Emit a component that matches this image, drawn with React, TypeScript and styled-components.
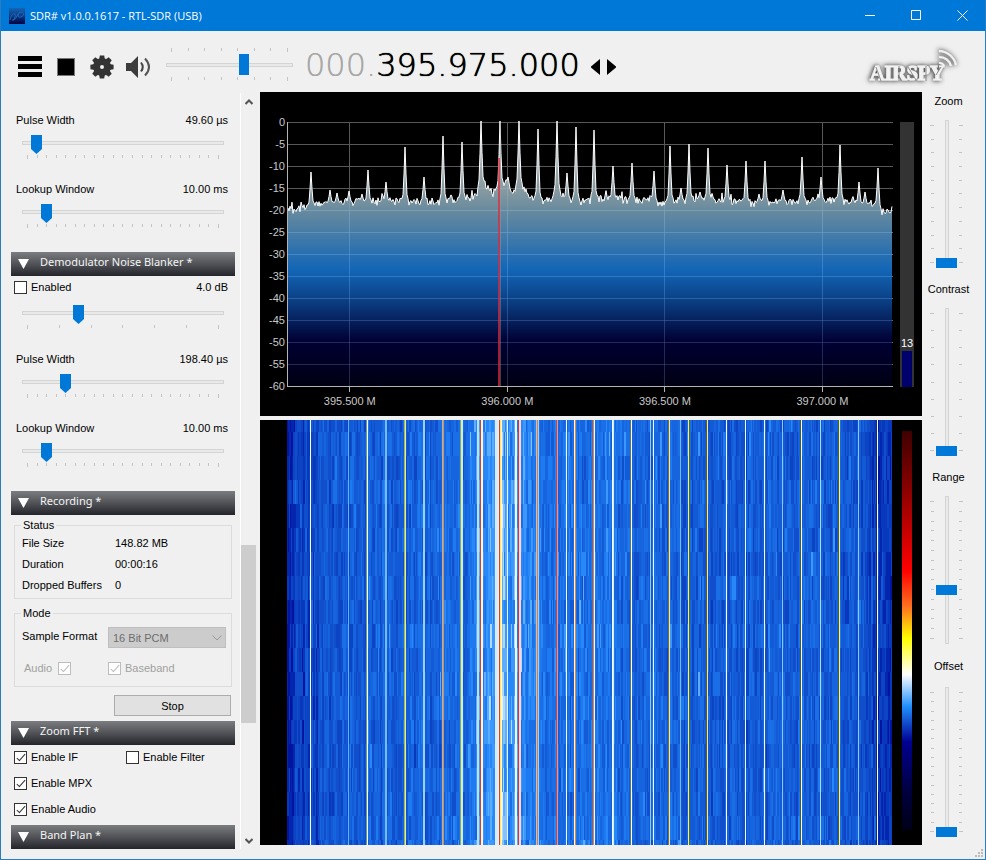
import React from "react";
import styled, { createGlobalStyle, css } from "styled-components";

const GlobalStyle = createGlobalStyle`
  *, *::before, *::after { box-sizing: border-box; }
  body { margin: 0; background: #f0f0f0; }
  button, input, select { font: inherit; color: inherit; margin: 0; }
`;

const UI_FONT = '"Liberation Sans", Arial, sans-serif';
const ACCENT = "#0078d7";

/* ---------- window ---------- */

const Window = styled.div`
  min-height: 100vh;
  display: flex;
  flex-direction: column;
  border: 1px solid #2b7cbf;
  border-top: 0;
  background: #f0f0f0;
  color: #000;
  font: 11px/14px ${UI_FONT};
`;

const TitleBar = styled.header`
  display: flex;
  align-items: center;
  height: 31px;
  padding-left: 8px;
  background: ${ACCENT};
  color: #fff;
`;

const Title = styled.h1`
  flex: 1;
  margin: 0 0 0 5px;
  font: 400 11px/31px "Open Sans", "Noto Sans", sans-serif;
`;

const CaptionButton = styled.button`
  width: 46px;
  height: 31px;
  padding: 0;
  border: 0;
  background: none;
  display: grid;
  place-items: center;
`;

const Toolbar = styled.div`
  display: flex;
  align-items: center;
  height: 61px;
  padding: 10px 20px 0 17px;
`;

const ToolButton = styled.button<{ $gap: number }>`
  padding: 0;
  border: 0;
  background: none;
  display: grid;
  margin-right: ${(p) => p.$gap}px;
`;

const Spacer = styled.div`
  flex: 1;
`;

const Frequency = styled.output`
  font: 200 32px/40px "DejaVu Sans", sans-serif;
  text-shadow: 0 0 0 currentColor, 0 0 1px currentColor;
  white-space: nowrap;
  margin: 0 11px 3px 12px;
`;

const Muted = styled.span`
  color: #a8a8a8;
  text-shadow: 0 0 0 currentColor;
`;

const Body = styled.main`
  flex: 1;
  display: grid;
  grid-template-columns: 239px 16px minmax(0, 1fr) 63px;
`;

/* ---------- sliders ---------- */

const groove = css`
  --edge: linear-gradient(#d4d4d4, #d4d4d4);
  --inner: linear-gradient(#e8eaea, #e8eaea);
`;

const rangeReset = css`
  appearance: none;
  display: block;
  padding: 0;
  border: 0;
`;

const HRange = styled.input.attrs({ type: "range" })<{ $pointed?: boolean }>`
  ${rangeReset}
  ${groove}
  width: 100%;
  height: ${(p) => (p.$pointed ? 19 : 21)}px;
  background:
    var(--inner) 50% ${(p) => (p.$pointed ? 7 : 10)}px / calc(100% - 2px) 2px no-repeat,
    var(--edge) 50% ${(p) => (p.$pointed ? 6 : 9)}px / 100% 4px no-repeat;
  &::-webkit-slider-thumb {
    appearance: none;
    width: ${(p) => (p.$pointed ? 11 : 10)}px;
    height: ${(p) => (p.$pointed ? 19 : 21)}px;
    background: ${ACCENT};
    clip-path: ${(p) =>
      p.$pointed ? "polygon(0 0, 100% 0, 100% 14px, 50% 100%, 0 14px)" : "none"};
  }
`;

const VRange = styled.input.attrs({ type: "range" })`
  ${rangeReset}
  ${groove}
  writing-mode: vertical-lr;
  direction: rtl;
  width: 21px;
  height: 100%;
  background:
    var(--inner) 10px 50% / 2px calc(100% - 2px) no-repeat,
    var(--edge) 9px 50% / 4px 100% no-repeat;
  &::-webkit-slider-thumb {
    appearance: none;
    width: 21px;
    height: 10px;
    background: ${ACCENT};
  }
`;

const Ticks = styled.div<{ $vertical?: boolean; $end?: boolean }>`
  display: flex;
  justify-content: space-between;
  flex-direction: ${(p) => (p.$vertical ? "column" : "row")};
  align-items: ${(p) => (p.$end ? "flex-end" : "flex-start")};
  padding: ${(p) => (p.$vertical ? "5px 0" : "0 5px")};
  height: ${(p) => (p.$vertical ? "auto" : "4px")};
`;

const Tick = styled.i<{ $vertical?: boolean }>`
  background: #c4c4c4;
  width: ${(p) => (p.$vertical ? 3 : 1)}px;
  height: ${(p) => (p.$vertical ? 1 : 3)}px;
  &:first-child,
  &:last-child {
    ${(p) => (p.$vertical ? "width: 4px;" : "height: 4px;")}
  }
`;

function TickRow(props: { count: number; vertical?: boolean; end?: boolean }) {
  return (
    <Ticks $vertical={props.vertical} $end={props.end} aria-hidden>
      {Array.from({ length: props.count }, (_, i) => (
        <Tick key={i} $vertical={props.vertical} />
      ))}
    </Ticks>
  );
}

const Volume = styled.div`
  width: 127px;
  margin-bottom: 14px;
  display: grid;
  gap: 2px;
  padding-top: 9px;
`;

/* ---------- sidebar ---------- */

const Sidebar = styled.aside`
  padding: 21px 5px 10px 10px;
  overflow: hidden;
`;

const Field = styled.div<{ $first?: boolean }>`
  height: ${(p) => (p.$first ? 72 : 69)}px;
  display: flex;
  flex-direction: column;
  gap: ${(p) => (p.$first ? 11 : 8)}px;
`;

const FieldHead = styled.div<{ $first?: boolean }>`
  display: flex;
  align-items: center;
  justify-content: space-between;
  height: 14px;
  padding: 0 7px 0 ${(p) => (p.$first ? 3 : 5)}px;
`;

const FieldSlider = styled.div`
  display: grid;
  gap: 1px;
  padding: 0 11px;
`;

const SectionHeader = styled.button<{ $gap?: number }>`
  width: 100%;
  height: 24px;
  margin: 1px 0 ${(p) => p.$gap ?? 0}px;
  padding: 0 0 4px 7px;
  border: 0;
  display: flex;
  align-items: center;
  gap: 11px;
  background: linear-gradient(#7c7d80, #4c4e53 55%, #24252a);
  color: #f4f4f4;
  font: 11px/20px "Noto Sans", sans-serif;
  text-align: left;
  svg {
    margin-top: 4px;
  }
`;

const CheckLabel = styled.label<{ $reverse?: boolean; $disabled?: boolean }>`
  display: inline-flex;
  flex-direction: ${(p) => (p.$reverse ? "row-reverse" : "row")};
  align-items: center;
  gap: ${(p) => (p.$reverse ? 6 : 4)}px;
  color: ${(p) => (p.$disabled ? "#a0a0a0" : "#000")};
`;

const CheckBox = styled.input.attrs({ type: "checkbox" })`
  appearance: none;
  width: 13px;
  height: 13px;
  border: 1px solid #333;
  background: #fff;
  display: grid;
  justify-content: center;
  &:checked::before {
    content: "";
    width: 4px;
    height: 9px;
    border: solid #333;
    border-width: 0 1px 1px 0;
    transform: rotate(42deg);
  }
  &:disabled,
  &:disabled::before {
    border-color: #bcbcbc;
  }
`;

const Group = styled.fieldset<{ $gap: number }>`
  margin: 0 3px ${(p) => p.$gap}px;
  padding: 1px 5px 2px 6px;
  border: 1px solid #dcdcdc;
  min-width: 0;
`;

const Legend = styled.legend`
  padding: 0 2px;
  line-height: 14px;
`;

const Stats = styled.dl`
  margin: 0 0 0 1px;
  display: grid;
  grid-template-columns: 93px 1fr;
  line-height: 21px;
  dd {
    margin: 0;
  }
`;

const FormatRow = styled.div`
  display: flex;
  align-items: flex-start;
  justify-content: space-between;
  margin: 6px 0 13px 1px;
  line-height: 18px;
`;

const SelectWrap = styled.div`
  display: grid;
  align-items: center;
  width: 118px;
  height: 21px;
  > * {
    grid-area: 1 / 1;
  }
  svg {
    justify-self: end;
    margin-right: 4px;
    pointer-events: none;
  }
`;

const Select = styled.select`
  appearance: none;
  width: 118px;
  height: 21px;
  padding: 0 4px;
  border: 1px solid #bfbfbf;
  border-radius: 0;
  background: #ccc;
  opacity: 1;
  color: #6d6d6d;
`;

const SourceRow = styled.div`
  display: grid;
  grid-template-columns: 84px 1fr;
  justify-items: start;
  padding: 0 0 9px 3px;
`;

const PushRow = styled.div`
  display: flex;
  justify-content: flex-end;
  margin: 0 4px 5px 0;
`;

const PushButton = styled.button`
  width: 117px;
  height: 21px;
  padding: 0;
  border: 1px solid #adadad;
  background: #e1e1e1;
`;

const CheckGrid = styled.div`
  display: grid;
  grid-template-columns: 112px 1fr;
  justify-items: start;
  row-gap: 12px;
  padding: 5px 3px 8px;
`;

/* ---------- scroll bar ---------- */

const ScrollBar = styled.div`
  width: 16px;
  margin: 1px 0 10px;
  border-left: 1px solid #fff;
  display: flex;
  flex-direction: column;
`;

const ScrollButton = styled.button`
  height: 17px;
  padding: 0;
  border: 0;
  background: none;
  display: grid;
  place-items: center;
`;

const ScrollTrack = styled.div`
  flex: 1;
  display: flex;
  flex-direction: column;
  &::before {
    content: "";
    flex: 435;
  }
  &::after {
    content: "";
    flex: 109;
  }
`;

const ScrollThumb = styled.div`
  flex: 178;
  background: #cdcdcd;
`;

/* ---------- displays ---------- */

const Displays = styled.div`
  display: flex;
  flex-direction: column;
  gap: 4px;
  padding: 0 0 14px 4px;
  min-width: 0;
`;

const Panel = styled.section<{ $top: number; $grow?: boolean }>`
  flex: ${(p) => (p.$grow ? "1 1 0" : "0 0 auto")};
  display: grid;
  grid-template-columns: 27px minmax(0, 1fr) 29px;
  padding-top: ${(p) => p.$top}px;
  background: #000;
  color: #c8c8c8;
`;

const LevelAxis = styled.div`
  display: flex;
  flex-direction: column;
  align-self: start;
  margin: -11px 0;
  padding-right: 2px;
  text-align: right;
  line-height: 22px;
`;

const FrequencyAxis = styled.div`
  grid-column: 2;
  display: grid;
  grid-template-columns: repeat(4, 1fr);
  width: 104%;
  margin-left: -16px;
  height: 24px;
  padding-top: 2px;
  text-align: center;
`;

const Plot = styled.svg<{ $tall?: boolean }>`
  display: block;
  width: 100%;
  height: ${(p) => (p.$tall ? "100%" : "270px")};
  min-height: 270px;
  overflow: visible;
`;

const Meter = styled.div`
  width: 14px;
  height: 265px;
  margin-left: 7px;
  padding: 0 2px;
  background: #333;
  color: #fff;
  display: flex;
  flex-direction: column;
  justify-content: flex-end;
  align-items: center;
`;

const MeterFill = styled.div`
  width: 10px;
  height: 36px;
  background: #00006c;
`;

const MeterValue = styled.span`
  line-height: 15px;
`;

const Palette = styled.div`
  width: 10px;
  margin: 11px 0 15px 9px;
  background: linear-gradient(
    #400000,
    #800000 13%,
    #ff0000 35%,
    #ff7020 44%,
    #ffff00 52%,
    #ffffff 61%,
    #2090ff 69%,
    #000090 78%,
    #000040 90%,
    #000018
  );
`;

/* ---------- right column ---------- */

const Tuning = styled.aside`
  display: flex;
  flex-direction: column;
`;

const TuningControl = styled.div<{ $tall?: boolean }>`
  height: 188px;
  padding-top: ${(p) => (p.$tall ? 3 : 2)}px;
  display: grid;
  grid-template-rows: 14px ${(p) => (p.$tall ? 150 : 148)}px;
  row-gap: ${(p) => (p.$tall ? 14 : 12)}px;
  label {
    text-align: center;
    margin-right: 10px;
  }
`;

const TuningSlider = styled.div`
  display: grid;
  grid-template-columns: 4px 21px 4px;
  column-gap: 2px;
  margin-left: 8px;
`;

const Grip = styled.svg`
  margin: auto 2px 2px auto;
`;

/* ---------- signal data ---------- */

function makeRandom(seed: number) {
  let s = seed;
  return () => {
    s = (s * 1664525 + 1013904223) % 4294967296;
    return s / 4294967296;
  };
}

const FLOOR: [number, number][] = [
  [0, 88], [12, 87], [25, 83], [45, 81], [75, 80], [112, 79], [150, 80], [172, 78],
  [183, 76], [188, 72], [193, 62], [197, 62], [205, 71], [211, 66], [218, 60],
  [224, 72], [231, 62], [237, 66], [243, 76], [256, 80], [264, 76], [269, 68],
  [276, 76], [293, 80], [312, 76], [345, 78], [362, 77], [371, 81], [410, 77],
  [463, 81], [515, 79], [550, 78], [572, 82], [588, 83], [594, 90], [604, 87],
];

const PEAKS: [number, number][] = [
  [23, 50], [42, 68], [49, 71], [61, 69], [74, 72], [80, 48], [95, 74], [98, 60],
  [117, 25], [136, 55], [155, 14], [174, 20], [193, -1], [212, -1], [220, 55],
  [231, -1], [250, 7], [269, -1], [279, 51], [288, 5], [306, 8], [325, 44],
  [344, 41], [366, 49], [382, 24], [393, 66], [401, 22], [412, 70], [420, 26],
  [439, 43], [458, 39], [471, 72], [477, 39], [495, 68], [514, 35], [533, 55],
  [552, 23], [571, 60], [577, 70], [590, 46],
];

function floorAt(x: number) {
  for (let i = 1; i < FLOOR.length; i++) {
    const [x1, y1] = FLOOR[i];
    if (x <= x1) {
      const [x0, y0] = FLOOR[i - 1];
      return y0 + ((y1 - y0) * (x - x0)) / (x1 - x0);
    }
  }
  return 87;
}

function buildTrace() {
  const random = makeRandom(7);
  const ys: number[] = [];
  for (let x = 0; x <= 604; x++) {
    ys.push(floorAt(x) + (random() - 0.5) * 8 - (random() > 0.94 ? 4 : 0));
  }
  const shape = [1, 0.5, 0.12, 0.05];
  for (const [px, py] of PEAKS) {
    for (let d = -3; d <= 3; d++) {
      const x = px + d;
      const base = floorAt(x);
      const y = base - (base - py) * shape[Math.abs(d)];
      ys[x] = Math.min(ys[x], y);
    }
  }
  return ys.map((y, x) => `${x + 1},${y.toFixed(1)}`).join(" ");
}

const TRACE = buildTrace();

const SHADES = [
  "#0014a0", "#0426ae", "#0838bc", "#0c44c4", "#104ecc", "#125ad6", "#1664de",
  "#1a6ee6", "#1e7af0", "#2888f8", "#3c98fc", "#5cacff", "#84c2ff", "#b0daff", "#dceeff",
];

const ENERGY: [number, number][] = [
  [0, 1.5], [22, 3], [40, 4.6], [90, 5.4], [130, 5.4], [165, 6], [185, 7],
  [192, 9.6], [205, 9.4], [212, 11.2], [222, 9.6], [232, 9.8], [240, 7.6],
  [255, 7], [285, 6.8], [315, 7], [345, 6], [400, 5.2], [470, 5], [530, 5.2],
  [565, 4.4], [580, 3.4], [604, 1.5],
];

function energyAt(x: number) {
  for (let i = 1; i < ENERGY.length; i++) {
    const [x1, v1] = ENERGY[i];
    if (x <= x1) {
      const [x0, v0] = ENERGY[i - 1];
      return v0 + ((v1 - v0) * (x - x0)) / (x1 - x0);
    }
  }
  return 2;
}

function buildWaterfall() {
  const random = makeRandom(42);
  const paths: string[] = SHADES.map(() => "");
  const steady = Array.from({ length: 605 }, () => (random() - 0.5) * 3.2);
  const edges = [0];
  for (let y = 12; y < 425; y += 24) edges.push(y);
  edges.push(425);
  for (let b = 0; b + 1 < edges.length; b++) {
    const lift = (random() - 0.5) * 0.4;
    let x = 0;
    while (x < 605) {
      const w = random() > 0.55 ? 2 : 1;
      const burst = random() > 0.97 ? 2.5 : 0;
      const v = energyAt(x) + steady[x] + (random() - 0.5) * 2.6 + lift + burst;
      const shade = Math.max(0, Math.min(SHADES.length - 1, Math.round(v)));
      const width = Math.min(w, 605 - x);
      paths[shade] += `M${x} ${edges[b]}h${width}V${edges[b + 1]}h${-width}z`;
      x += w;
    }
  }
  return paths;
}

const WATERFALL = buildWaterfall();

/* x, width, colour of each steady carrier */
const CARRIERS: [number, number, string][] = [
  [23, 1, "#f4fff8"], [61, 1, "#5cb4f8"], [79, 1, "#6a9a90"], [80, 1, "#f0fff4"],
  [98, 2, "#74bcf8"], [117, 1, "#a8b850"], [118, 1, "#d8f0a0"], [136, 2, "#98d0ff"],
  [155, 1, "#d8a878"], [156, 1, "#a89898"], [173, 1, "#98a848"], [174, 2, "#c4f0ec"],
  [190, 2, "#c0e0ff"], [193, 1, "#c84820"], [194, 2, "#fff4f0"],
  [208, 3, "#d8ecff"], [211, 1, "#fff0f4"], [212, 1, "#d04420"], [213, 1, "#ffe870"],
  [214, 1, "#fff8c8"], [220, 1, "#e4f4ff"], [228, 2, "#f0faff"], [231, 1, "#c83c3c"],
  [232, 2, "#f8d8e0"], [249, 1, "#e0b8a0"], [250, 1, "#b08878"], [251, 1, "#a0d0ff"],
  [269, 1, "#c84448"], [270, 1, "#c0a0b8"], [279, 1, "#f0fff8"], [287, 1, "#fff8e0"],
  [288, 1, "#e08840"], [305, 1, "#90605c"], [306, 1, "#a89098"], [307, 1, "#f4fcff"],
  [325, 1, "#f8fff4"], [326, 1, "#d0f0f8"], [343, 1, "#607860"], [344, 1, "#f8fff8"],
  [363, 1, "#90ccff"], [366, 1, "#f0fcff"], [381, 1, "#7c7440"], [382, 1, "#e8e8b0"],
  [393, 1, "#70b8f8"], [401, 1, "#dcf4a0"], [402, 1, "#586828"],
  [419, 1, "#58602c"], [420, 1, "#ece8a8"], [439, 1, "#f8ffff"], [458, 1, "#e8fff8"],
  [477, 1, "#f8ffe0"], [495, 1, "#88c8fc"], [513, 1, "#505c28"], [514, 1, "#f4fff0"],
  [533, 1, "#a8dcff"], [551, 1, "#586020"], [552, 1, "#e8f4a8"], [571, 1, "#88c8fc"],
  [589, 1, "#102c70"], [590, 1, "#f4faff"],
];

/* ---------- components ---------- */

function ParameterSlider(props: { id: string; label: string; value: string; position: number }) {
  return (
    <Field>
      <FieldHead>
        <label htmlFor={props.id}>{props.label}</label>
        <span>{props.value}</span>
      </FieldHead>
      <FieldSlider>
        <HRange $pointed id={props.id} max={191} defaultValue={props.position} />
        <TickRow count={21} />
      </FieldSlider>
    </Field>
  );
}

function Section(props: { title: string; gap?: number }) {
  return (
    <SectionHeader $gap={props.gap} aria-expanded>
      <svg width="11" height="10" aria-hidden>
        <path d="M0 0H11L5.5 10Z" fill="#fff" />
      </svg>
      {props.title}
    </SectionHeader>
  );
}

function Check(props: { label: string; checked?: boolean; disabled?: boolean; reverse?: boolean }) {
  return (
    <CheckLabel $reverse={props.reverse} $disabled={props.disabled}>
      <CheckBox defaultChecked={props.checked} disabled={props.disabled} />
      {props.label}
    </CheckLabel>
  );
}

function Tuner(props: { label: string; ticks: number; position: number; tall?: boolean }) {
  const id = `tune-${props.label.toLowerCase()}`;
  return (
    <TuningControl $tall={props.tall}>
      <label htmlFor={id}>{props.label}</label>
      <TuningSlider>
        <TickRow vertical end count={props.ticks} />
        <VRange id={id} max={138} defaultValue={props.position} />
        <TickRow vertical count={props.ticks} />
      </TuningSlider>
    </TuningControl>
  );
}

function Spectrum() {
  return (
    <Panel $top={30} aria-label="Spectrum">
      <LevelAxis>
        {Array.from({ length: 13 }, (_, i) => (
          <span key={i}>{i === 0 ? "0" : `-${i * 5}`}</span>
        ))}
      </LevelAxis>
      <Plot viewBox="0 0 606 270" preserveAspectRatio="none" aria-hidden>
        <defs>
          <linearGradient id="fill" gradientUnits="userSpaceOnUse" x1="0" y1="0" x2="0" y2="264">
            <stop offset="0" stopColor="#e8e8e8" />
            <stop offset="0.26" stopColor="#9cb2ba" />
            <stop offset="0.34" stopColor="#76a0b8" />
            <stop offset="0.56" stopColor="#1676d4" />
            <stop offset="0.68" stopColor="#0c4898" />
            <stop offset="0.83" stopColor="#00003c" />
            <stop offset="1" stopColor="#000016" />
          </linearGradient>
        </defs>
        <g fill="#585858" shapeRendering="crispEdges">
          {Array.from({ length: 12 }, (_, i) => (
            <rect key={i} x="1" y={i * 22} width="605" height="1" />
          ))}
          {[62, 220, 377, 535].map((x) => (
            <rect key={x} x={x} y="0" width="1" height="264" />
          ))}
        </g>
        <polygon points={`1,264 ${TRACE} 605,264`} fill="url(#fill)" fillOpacity="0.86" />
        <g fill="#8cc8ff" fillOpacity="0.16" shapeRendering="crispEdges">
          {Array.from({ length: 8 }, (_, i) => (
            <rect key={i} x="1" y={88 + i * 22} width="605" height="1" />
          ))}
          {[62, 220, 377, 535].map((x) => (
            <rect key={x} x={x} y="88" width="1" height="176" />
          ))}
        </g>
        <polyline points={TRACE} fill="none" stroke="#fff" strokeWidth="1" />
        <g shapeRendering="crispEdges">
          <rect x="211" y="36" width="2" height="228" fill="#e02a3a" fillOpacity="0.72" />
          <rect x="213" y="0" width="1" height="264" fill="#a0a0a0" fillOpacity="0.4" />
          <path
            d="M0 0h1V264H606v1H0zM62 265h1v5h-1zM220 265h1v5h-1zM377 265h1v5h-1zM535 265h1v5h-1z"
            fill="#b4b4b4"
          />
        </g>
      </Plot>
      <Meter>
        <MeterValue>13</MeterValue>
        <MeterFill />
      </Meter>
      <FrequencyAxis>
        <span>395.500 M</span>
        <span>396.000 M</span>
        <span>396.500 M</span>
        <span>397.000 M</span>
      </FrequencyAxis>
    </Panel>
  );
}

function Waterfall() {
  return (
    <Panel $top={0} $grow aria-label="Waterfall">
      <span />
      <Plot $tall viewBox="0 0 606 425" preserveAspectRatio="none" shapeRendering="crispEdges" aria-hidden>
        {WATERFALL.map((d, i) => (
          <path key={i} d={d} fill={SHADES[i]} />
        ))}
        {CARRIERS.map(([x, w, color]) => (
          <rect key={x} x={x} y="0" width={w} height="425" fill={color} />
        ))}
      </Plot>
      <Palette />
    </Panel>
  );
}

const GEAR_TEETH = [0, 45, 90, 135, 180, 225, 270, 315];

function Logo() {
  return (
    <svg width="104" height="48" role="img" aria-label="AIRSPY">
      <defs>
        <filter id="soft" x="-20%" y="-40%" width="140%" height="180%">
          <feDropShadow dx="-1" dy="0" stdDeviation="2" floodColor="#333" floodOpacity="1" />
          <feDropShadow dx="0" dy="0" stdDeviation="2" floodColor="#777" floodOpacity="0.6" />
        </filter>
      </defs>
      <g filter="url(#soft)">
        <text
          x="9"
          y="37"
          fontFamily="Liberation Serif, serif"
          fontWeight="700"
          fontSize="20"
          fill="#f2f2f2"
          stroke="#f2f2f2"
          strokeWidth="1"
        >
          AIRSPY
        </text>
        <path
          d="M78 20a5 5 0 0 1 5 3M78 14a12 12 0 0 1 12 9M78 8a18 18 0 0 1 17 14"
          fill="none"
          stroke="#f2f2f2"
          strokeWidth="2"
        />
      </g>
      <path d="M15 24L20 38M38 23V38M47 24L55 37M65 23V38M80 24L75 32" stroke="#8c8c8c" fill="none" />
    </svg>
  );
}

export default function App() {
  return (
    <Window>
      <GlobalStyle />
      <TitleBar>
        <svg width="16" height="16" aria-hidden>
          <defs>
            <linearGradient id="app" x1="0" y1="0" x2="0" y2="1">
              <stop offset="0" stopColor="#1464b4" />
              <stop offset="0.5" stopColor="#083c88" />
              <stop offset="1" stopColor="#000040" />
            </linearGradient>
          </defs>
          <rect width="16" height="16" fill="url(#app)" />
          <path
            d="M1 12C2 7 5 4 6 6S5 13 3 12M4 12C8 12 8 4 12 4s3 4 0 5-4-2-1-5"
            fill="none"
            stroke="#2468b4"
            strokeWidth="1"
          />
        </svg>
        <Title>SDR# v1.0.0.1617 - RTL-SDR (USB)</Title>
        <CaptionButton aria-label="Minimize">
          <svg width="11" height="11"><path d="M0 5.5H10" stroke="#fff" /></svg>
        </CaptionButton>
        <CaptionButton aria-label="Maximize">
          <svg width="11" height="11"><path d="M.5.5h9v9h-9z" fill="none" stroke="#fff" /></svg>
        </CaptionButton>
        <CaptionButton aria-label="Close">
          <svg width="11" height="11"><path d="M.5.5l10 10M10.500.5l-10 10" stroke="#fff" /></svg>
        </CaptionButton>
      </TitleBar>

      <Toolbar>
        <ToolButton $gap={15} aria-label="Menu">
          <svg width="24" height="21"><path d="M0 0h24v5H0zM0 8h24v5H0zM0 16h24v5H0z" /></svg>
        </ToolButton>
        <ToolButton $gap={15} aria-label="Stop">
          <svg width="18" height="18">
            <rect width="18" height="18" fill="#777" />
            <rect x="1" y="1" width="16" height="16" />
          </svg>
        </ToolButton>
        <ToolButton $gap={12} aria-label="Settings">
          <svg width="24" height="24" viewBox="-12 -12 24 24" fill="#333">
            {GEAR_TEETH.map((a) => (
              <path key={a} d="M-3-7L-2.200-11.600H2.200L3-7Z" transform={`rotate(${a})`} />
            ))}
            <circle r="5.500" fill="none" stroke="#333" strokeWidth="7" />
          </svg>
        </ToolButton>
        <ToolButton $gap={15} aria-label="Mute">
          <svg width="25" height="22" fill="none">
            <path d="M0 7H5L12 0V22L5 15H0Z" fill="#3c3c3c" />
            <path d="M15 6.500Q18.500 11 15 15.500" stroke="#444" strokeWidth="2" />
            <path d="M19 2.500Q27 11 19 19.500" stroke="#555" strokeWidth="2" />
          </svg>
        </ToolButton>
        <Volume>
          <TickRow count={8} />
          <HRange aria-label="Volume" max={117} defaultValue={73} />
          <TickRow count={8} />
        </Volume>
        <Frequency>
          <Muted>000.</Muted>395.975.000
        </Frequency>
        <ToolButton $gap={5} aria-label="Step down">
          <svg width="10" height="16"><path d="M9 0V16L0 8.500V7.500Z" /></svg>
        </ToolButton>
        <ToolButton $gap={0} aria-label="Step up">
          <svg width="10" height="16"><path d="M1 0V16L10 8.500V7.500Z" /></svg>
        </ToolButton>
        <Spacer />
        <Logo />
      </Toolbar>

      <Body>
        <Sidebar>
          <ParameterSlider id="nb-pulse" label="Pulse Width" value="49.60 µs" position={9} />
          <ParameterSlider id="nb-lookup" label="Lookup Window" value="10.00 ms" position={19} />

          <Section title="Demodulator Noise Blanker *" gap={4} />
          <Field $first>
            <FieldHead $first>
              <Check label="Enabled" />
              <span>4.0 dB</span>
            </FieldHead>
            <FieldSlider>
              <HRange $pointed aria-label="Threshold" max={191} defaultValue={51} />
              <TickRow count={7} />
            </FieldSlider>
          </Field>
          <ParameterSlider id="dnb-pulse" label="Pulse Width" value="198.40 µs" position={38} />
          <ParameterSlider id="dnb-lookup" label="Lookup Window" value="10.00 ms" position={19} />

          <Section title="Recording *" gap={3} />
          <Group $gap={7}>
            <Legend>Status</Legend>
            <Stats>
              <dt>File Size</dt>
              <dd>148.82 MB</dd>
              <dt>Duration</dt>
              <dd>00:00:16</dd>
              <dt>Dropped Buffers</dt>
              <dd>0</dd>
            </Stats>
          </Group>
          <Group $gap={8}>
            <Legend>Mode</Legend>
            <FormatRow>
              <label htmlFor="format">Sample Format</label>
              <SelectWrap>
                <Select id="format" disabled>
                  <option>16 Bit PCM</option>
                </Select>
                <svg width="10" height="6" fill="none" aria-hidden>
                  <path d="M.5.5L5 5 9.500.5" stroke="#999" />
                </svg>
              </SelectWrap>
            </FormatRow>
            <SourceRow>
              <Check label="Audio" checked disabled reverse />
              <Check label="Baseband" checked disabled />
            </SourceRow>
          </Group>
          <PushRow>
            <PushButton>Stop</PushButton>
          </PushRow>

          <Section title="Zoom FFT *" />
          <CheckGrid>
            <Check label="Enable IF" checked />
            <Check label="Enable Filter" />
            <Check label="Enable MPX" checked />
            <span />
            <Check label="Enable Audio" checked />
          </CheckGrid>
          <Section title="Band Plan *" />
        </Sidebar>

        <ScrollBar>
          <ScrollButton aria-label="Scroll up">
            <svg width="8" height="6" fill="none"><path d="M.5 5L4 1.500 7.500 5" stroke="#555" strokeWidth="2" /></svg>
          </ScrollButton>
          <ScrollTrack>
            <ScrollThumb />
          </ScrollTrack>
          <ScrollButton aria-label="Scroll down">
            <svg width="8" height="6" fill="none"><path d="M.5 1L4 4.500 7.500 1" stroke="#555" strokeWidth="2" /></svg>
          </ScrollButton>
        </ScrollBar>

        <Displays>
          <Spectrum />
          <Waterfall />
        </Displays>

        <Tuning>
          <Tuner label="Zoom" ticks={11} position={0} />
          <Tuner label="Contrast" ticks={9} position={0} />
          <Tuner label="Range" ticks={15} position={49} />
          <Tuner label="Offset" ticks={16} position={0} tall />
          <Grip width="8" height="8" fill="#bbb" aria-hidden>
            <path d="M6 0h2v2H6zM3 3h2v2H3zM6 3h2v2H6zM0 6h2v2H0zM3 6h2v2H3zM6 6h2v2H6z" />
          </Grip>
        </Tuning>
      </Body>
    </Window>
  );
}
